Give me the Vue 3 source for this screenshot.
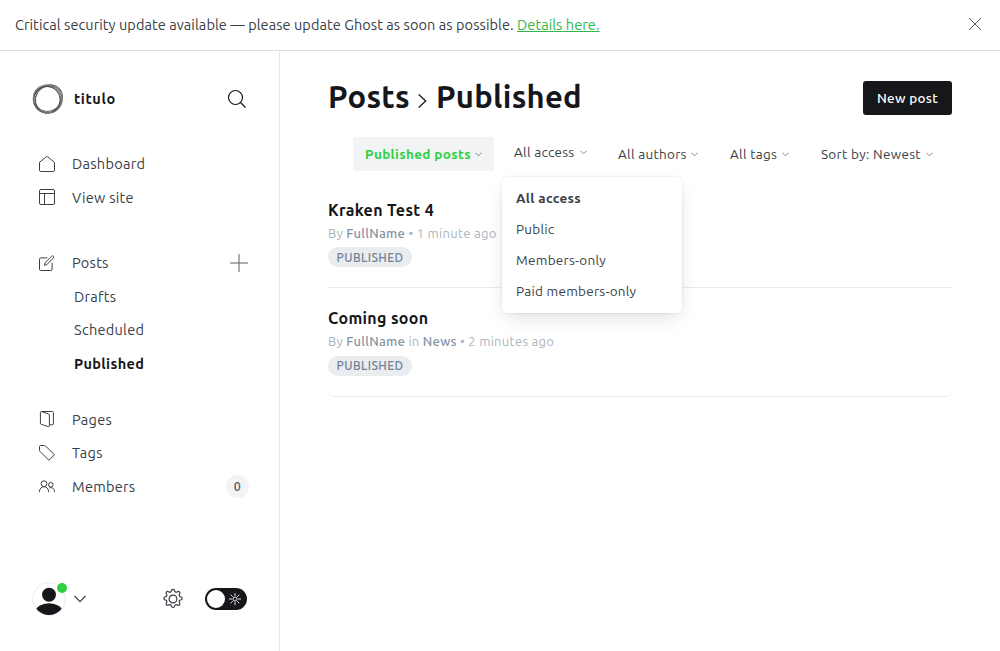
<script setup>
import { ref } from 'vue'

const mainLinks = [
  { label: 'Dashboard', icon: 'house' },
  { label: 'View site', icon: 'layout' },
]
const postViews = [
  { label: 'Drafts' },
  { label: 'Scheduled' },
  { label: 'Published', active: true },
]
const contentLinks = [
  { label: 'Pages', icon: 'pages' },
  { label: 'Tags', icon: 'tag' },
  { label: 'Members', icon: 'members', count: 0 },
]
const accessOptions = ['All access', 'Public', 'Members-only', 'Paid members-only']
const access = ref('All access')
const filters = [
  { label: 'Published posts', selected: true },
  { label: 'All access', open: true },
  { label: 'All authors' },
  { label: 'All tags' },
  { label: 'Sort by: Newest' },
]
const posts = [
  { title: 'Kraken Test 4', author: 'FullName', time: '1 minute ago' },
  { title: 'Coming soon', author: 'FullName', tag: 'News', time: '2 minutes ago' },
]

const icons = {
  house: ['M.5 6.3V14.2a1.3 1.3 0 0 0 1.3 1.3h12.4a1.3 1.3 0 0 0 1.3-1.3V6.3L8.7.8a1.1 1.1 0 0 0-1.4 0z'],
  layout: ['M2 .5h12A1.5 1.5 0 0 1 15.5 2v12a1.5 1.5 0 0 1-1.5 1.5H2A1.5 1.5 0 0 1 .5 14V2A1.5 1.5 0 0 1 2 .5z', 'M.5 4.5h15', 'M5.5 4.5v11'],
  edit: ['M8.3 2.9H1.8A1.3 1.3 0 0 0 .5 4.2v10a1.3 1.3 0 0 0 1.3 1.3h10a1.3 1.3 0 0 0 1.3-1.3V7.8', 'M7.8 9.7l-2.4.6.6-2.4 6.6-6.7a1.25 1.25 0 0 1 1.8 1.8z'],
  pages: ['M10.4 13.8h3a1 1 0 0 0 1-1V1.5a1 1 0 0 0-1-1H2.4', 'M2.4.5a1 1 0 0 0-1 1v10.8a1 1 0 0 0 .8 1l6.9 2.2a1 1 0 0 0 1.3-1V4a1 1 0 0 0-.8-1z'],
  tag: ['M.5 1.6V5.4a1.2 1.2 0 0 0 .4.9l9 9 5.5-5.5-9-9A1.2 1.2 0 0 0 5.5.5H1.6A1.1 1.1 0 0 0 .5 1.6z'],
  members: ['M5 2.8a2.900 2.900 0 1 0 0 5.800a2.900 2.900 0 1 0 0-5.800', 'M.5 14.200v-1a4.500 4.500 0 0 1 9 0v1', 'M11.800 4.500a2.300 2.300 0 1 0 0 4.600a2.300 2.300 0 1 0 0-4.600', 'M10.300 9.900a3.700 3.700 0 0 1 5.200 3.400v.9'],
}
</script>

<template>
  <div class="app">
    <div class="alert">
      <p>Critical security update available — please update Ghost as soon as possible. <a>Details here.</a></p>
      <svg class="close" width="14" height="14" viewBox="0 0 14 14"><path d="M1 1l12 12M13 1L1 13" /></svg>
    </div>

    <div class="body">
      <nav class="sidebar">
        <header class="site">
          <svg class="logo" width="32" height="32" viewBox="0 0 32 32">
            <path d="M12 2.800Q22 -.6 29 8.500" stroke="#bbb" stroke-width="2.200" />
            <path d="M30 17Q28.500 26 20 29.500" stroke="#aaa" stroke-width="2.400" />
            <ellipse cx="15" cy="16.600" rx="13.300" ry="13.300" stroke="#333" stroke-width="1.300" />
            <ellipse cx="16.800" cy="15.200" rx="14.300" ry="12.600" transform="rotate(-38 16.800 15.200)" stroke="#555" stroke-width=".9" />
            <ellipse cx="15.300" cy="16" rx="14.400" ry="12.700" transform="rotate(42 15.300 16)" stroke="#777" stroke-width="1.100" />
            <ellipse cx="16.700" cy="16.600" rx="14" ry="13" transform="rotate(-58 16.700 16.600)" stroke="#555" stroke-width=".8" />
            <ellipse cx="15.400" cy="16" rx="14.500" ry="14.200" stroke="#888" stroke-width=".7" />
          </svg>
          <span class="site-name">titulo</span>
          <svg class="search" width="20" height="20" viewBox="0 0 20 20"><circle cx="8.500" cy="8.500" r="7" /><path d="M13.500 13.500l5 5" /></svg>
        </header>

        <ul class="group">
          <li v-for="l in mainLinks" :key="l.label" class="row">
            <svg class="icon" width="16" height="16" viewBox="0 0 16 16"><path v-for="d in icons[l.icon]" :key="d" :d="d" /></svg>
            <span>{{ l.label }}</span>
          </li>
        </ul>

        <ul class="group">
          <li class="row">
            <svg class="icon" width="16" height="16" viewBox="0 0 16 16"><path v-for="d in icons.edit" :key="d" :d="d" /></svg>
            <span>Posts</span>
            <svg class="plus" width="18" height="18" viewBox="0 0 18 18"><path d="M9 0v18M0 9h18" /></svg>
          </li>
          <li v-for="v in postViews" :key="v.label" class="row sub" :class="{ active: v.active }">{{ v.label }}</li>
        </ul>

        <ul class="group content-group">
          <li v-for="l in contentLinks" :key="l.label" class="row">
            <svg class="icon" width="16" height="16" viewBox="0 0 16 16"><path v-for="d in icons[l.icon]" :key="d" :d="d" /></svg>
            <span>{{ l.label }}</span>
            <span v-if="l.count !== undefined" class="count">{{ l.count }}</span>
          </li>
        </ul>

        <footer class="user">
          <div class="avatar">
            <svg width="34" height="34" viewBox="0 0 34 34">
              <defs><clipPath id="face"><circle cx="17" cy="17" r="16" /></clipPath></defs>
              <circle cx="17" cy="17" r="16.400" fill="#fff" stroke="#e3e6e9" stroke-width=".8" />
              <circle cx="17" cy="12.700" r="7" fill="#15171a" stroke="none" />
              <ellipse cx="17" cy="30" rx="13.500" ry="8.700" fill="#15171a" stroke="none" clip-path="url(#face)" />
            </svg>
            <i class="online"></i>
          </div>
          <svg class="caret" width="12" height="8" viewBox="0 0 12 8"><path d="M.6 1L6 6.700L11.400 1" /></svg>
          <svg class="gear" width="22" height="22" viewBox="0 0 22 22">
            <circle cx="11" cy="11" r="3.900" />
            <path d="M9.6 2.250a1.5 1.5 0 0 1 2.800 0l.35 1a1.5 1.5 0 0 0 2.060.85l.95-.45a1.5 1.500 0 0 1 2 2l-.45.950a1.500 1.500 0 0 0 .85 2.050l1 .35a1.500 1.500 0 0 1 0 2.800l-1 .35a1.500 1.500 0 0 0-.85 2.060l.45.95a1.500 1.500 0 0 1-2 2l-.950-.45a1.500 1.500 0 0 0-2.050.85l-.35 1a1.500 1.500 0 0 1-2.800 0l-.35-1a1.500 1.500 0 0 0-2.060-.85l-.95.45a1.500 1.500 0 0 1-2-2l.45-.95a1.500 1.500 0 0 0-.85-2.050l-1-.35a1.500 1.500 0 0 1 0-2.800l1-.35a1.500 1.500 0 0 0 .85-2.060l-.45-.95a1.500 1.500 0 0 1 2-2l.950.45a1.500 1.500 0 0 0 2.050-.85z" />
          </svg>
          <div class="toggle">
            <i class="knob"></i>
            <svg class="sun" width="12" height="12" viewBox="0 0 12 12">
              <circle cx="6" cy="6" r="2" />
              <path d="M6 0v3M6 9v3M0 6h3M9 6h3M1.700 1.700l2.100 2.100M8.200 8.200l2.100 2.100M10.300 1.700L8.200 3.800M3.800 8.200l-2.100 2.100" />
            </svg>
          </div>
        </footer>
      </nav>

      <main class="main">
        <header class="head">
          <h1>
            <span>Posts</span>
            <svg width="9" height="14" viewBox="0 0 9 14"><path d="M.7.6L7.700 7L.7 13.400" /></svg>
            <span>Published</span>
          </h1>
          <button class="new">New post</button>
        </header>

        <div class="filters">
          <div v-for="f in filters" :key="f.label" class="filter" :class="{ selected: f.selected, open: f.open }">
            <span>{{ f.label }}</span>
            <svg width="7" height="5" viewBox="0 0 7 5"><path d="M.4.7l3.100 3.100L6.600.7" /></svg>
            <ul v-if="f.open" class="menu">
              <li v-for="o in accessOptions" :key="o" :class="{ current: o === access }">{{ o }}</li>
            </ul>
          </div>
        </div>

        <ol class="list">
          <li v-for="p in posts" :key="p.title" class="post">
            <h3>{{ p.title }}</h3>
            <p>By <b>{{ p.author }}</b><template v-if="p.tag"> in <b>{{ p.tag }}</b></template> • {{ p.time }}</p>
            <span class="status">PUBLISHED</span>
          </li>
        </ol>
      </main>
    </div>
  </div>
</template>

<style>
body {
  background: #fff;
  overflow: hidden;
}
</style>

<style scoped>
.app {
  display: flex;
  flex-direction: column;
  height: 651px;
  font-family: Ubuntu, "Noto Sans", sans-serif;
  font-size: 14.5px;
  letter-spacing: .28px;
  color: #394047;
}
ul, ol, h1, h3, p { margin: 0; padding: 0; list-style: none; }
svg { flex: none; fill: none; stroke: #394047; display: block; }

.alert {
  display: flex;
  align-items: center;
  justify-content: space-between;
  height: 48px;
  padding: 0 18px 2px 15px;
  border-bottom: 1px solid #dddfe1;
}
.alert p { letter-spacing: .07px; }
.alert a { color: #30b74b; text-decoration: underline; }
.close { stroke-width: 1; stroke: #50565d; }

.body { flex: 1; display: flex; min-height: 0; }
.sidebar {
  display: flex;
  flex-direction: column;
  width: 279px;
  border-right: 1px solid #e3e5e8;
}
.site { display: flex; align-items: center; height: 32px; margin: 32px 32px 0; }
.site-name { margin-left: 10px; padding-bottom: 2px; font-weight: 700; color: #15171a; letter-spacing: .6px; }
.search { margin-left: auto; stroke: #15171a; stroke-width: 1.2; }

.group { margin-top: 32px; }
.content-group { margin-top: 22.5px; }
.row { display: flex; align-items: center; height: 33.5px; padding: 0 30px 0 39px; }
.icon { margin-right: 17px; }
.sub { padding-left: 74px; }
.active { font-weight: 700; color: #15171a; letter-spacing: .34px; }
.plus { margin-left: auto; margin-right: 1px; stroke-width: 1; stroke: #5b6168; }
.count {
  margin-left: auto;
  width: 23px;
  height: 23px;
  border-radius: 50%;
  background: #f1f3f5;
  font-size: 12.5px;
  font-weight: 500;
  line-height: 23px;
  text-align: center;
  color: #50575e;
}

.user { display: flex; align-items: center; height: 34px; margin: auto 32px 35px; }
.avatar { position: relative; }
.online {
  position: absolute;
  top: 1px;
  right: -1px;
  width: 10px;
  height: 10px;
  border-radius: 50%;
  background: #30cf43;
}
.caret { margin-left: 8px; stroke-width: 1.1; }
.gear { margin-left: auto; margin-right: 21px; stroke-width: 1.2; }
.toggle {
  display: flex;
  align-items: center;
  justify-content: space-between;
  width: 42px;
  height: 22px;
  padding: 0 6px 0 2px;
  box-sizing: border-box;
  border-radius: 11px;
  background: #15171a;
}
.knob { width: 18px; height: 18px; border-radius: 50%; background: #fff; }
.sun { stroke: #fff; stroke-width: .9; }

.main { flex: 1; padding: 0 48px; }
.head { display: flex; align-items: center; justify-content: space-between; height: 34px; margin-top: 30px; }
h1 { display: flex; align-items: center; padding-bottom: 2px; font-size: 31px; font-weight: 700; letter-spacing: .28px; color: #15171a; line-height: 34px; }
h1 svg { margin: 7px 9px 0 8px; stroke: #15171a; stroke-width: 1.3; }
.new {
  width: 89px;
  height: 34px;
  padding: 0;
  border: 0;
  border-radius: 3px;
  background: #15171a;
  color: #fff;
  font: 500 13.5px Ubuntu, "Noto Sans", sans-serif;
  letter-spacing: .3px;
}

.filters {
  display: grid;
  grid-template-columns: 141px 96px 104px 83px 136px;
  column-gap: 8px;
  margin: 22px 0 0 25px;
}
.filter {
  position: relative;
  display: flex;
  align-items: center;
  justify-content: space-between;
  height: 34px;
  padding: 0 12px;
  box-sizing: border-box;
  font-size: 13.5px;
  letter-spacing: .3px;
  white-space: nowrap;
  border-radius: 2px;
}
.filter svg { stroke: #7c8b9a; stroke-width: 1; }
.selected { background: #f1f3f4; color: #30cf43; font-weight: 700; letter-spacing: .36px; }
.open { padding-bottom: 4px; padding-right: 11px; }
.menu {
  position: absolute;
  z-index: 2;
  top: 40px;
  left: 0;
  width: 180px;
  height: 136px;
  padding: 6px 0;
  box-sizing: border-box;
  border-radius: 5px;
  background: #fff;
  box-shadow: 0 0 0 1px rgba(0, 0, 0, .04), 0 7px 20px -4px rgba(0, 0, 0, .15);
  letter-spacing: .27px;
}
.menu li { padding-left: 14px; line-height: 31px; }
.menu .current { font-weight: 700; letter-spacing: .36px; }

.list { margin-top: 9px; }
.post { height: 108px; padding-top: 20px; box-sizing: border-box; border-bottom: 1px solid #e9ebee; }
.post:last-child { height: 109px; border-radius: 5px; }
h3 { font-size: 16px; font-weight: 600; line-height: 21px; letter-spacing: .34px; color: #15171a; }
.post p { margin-top: 2px; font-size: 13px; line-height: 20px; letter-spacing: .29px; color: #abb4be; }
.post b { font-weight: 500; color: #8393a5; }
.status {
  display: block;
  width: 84px;
  height: 20px;
  margin-top: 4px;
  border-radius: 10px;
  background: #e9edf0;
  color: #738192;
  font-size: 12px;
  font-weight: 500;
  line-height: 21px;
  letter-spacing: .38px;
  text-align: center;
}
.post:last-child .status { margin-top: 5px; line-height: 20px; }
</style>
